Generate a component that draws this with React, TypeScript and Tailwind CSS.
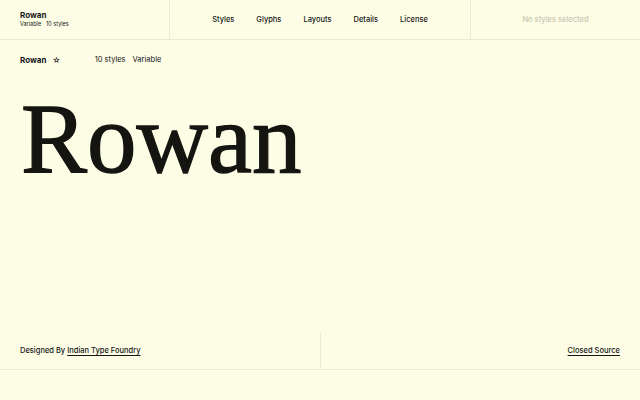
export default function App() {
  const nav = ["Styles", "Glyphs", "Layouts", "Details", "License"]
  return (
    <div className="h-[400px] w-[640px] bg-[#fdfde6] text-[#161616] flex flex-col" style={{ fontFamily: "Inter, 'Liberation Sans', sans-serif" }}>
      {/* top bar */}
      <header className="h-[40px] flex border-b border-[#ebead4]">
        <div className="w-[170px] border-r border-[#ebead4] px-5 pt-[10px]">
          <div className="text-[8px] font-bold leading-[10px]">Rowan</div>
          <div className="text-[5.5px] leading-[9px] flex gap-[5px]">
            <span>Variable</span>
            <span>10 styles</span>
          </div>
        </div>
        <nav className="flex-1 flex items-center justify-center gap-[22px] text-[7.5px] font-medium">
          {nav.map((n) => (
            <span key={n}>{n}</span>
          ))}
        </nav>
        <div className="w-[170px] border-l border-[#ebead4] flex items-center justify-center text-[7.5px] font-medium text-[#c9c7b3]">
          No styles selected
        </div>
      </header>

      <main className="flex-1 px-5">
        <div className="flex items-center h-[40px] text-[7.5px]">
          <span className="font-bold text-[8px]">Rowan</span>
          <span className="ml-[6px] text-[8px]">☆</span>
          <span className="ml-[34px]">10 styles</span>
          <span className="ml-[7px]">Variable</span>
        </div>
        <h1
          className="text-[99px] leading-none mt-[9px] ml-[1px] text-[#141410] [-webkit-text-stroke:1.3px_#141410]"
          style={{ fontFamily: "'Liberation Serif', serif" }}
        >
          Rowan
        </h1>
      </main>

      <footer className="h-[38px] flex border-b border-[#ebead4] mb-[30px] text-[7.5px] font-medium">
        <div className="flex-1 flex items-center px-5 border-r border-[#ebead4]">
          Designed By&nbsp;<span className="underline underline-offset-2">Indian Type Foundry</span>
        </div>
        <div className="flex-1 flex items-center justify-end px-5">
          <span className="underline underline-offset-2">Closed Source</span>
        </div>
      </footer>
    </div>
  )
}
